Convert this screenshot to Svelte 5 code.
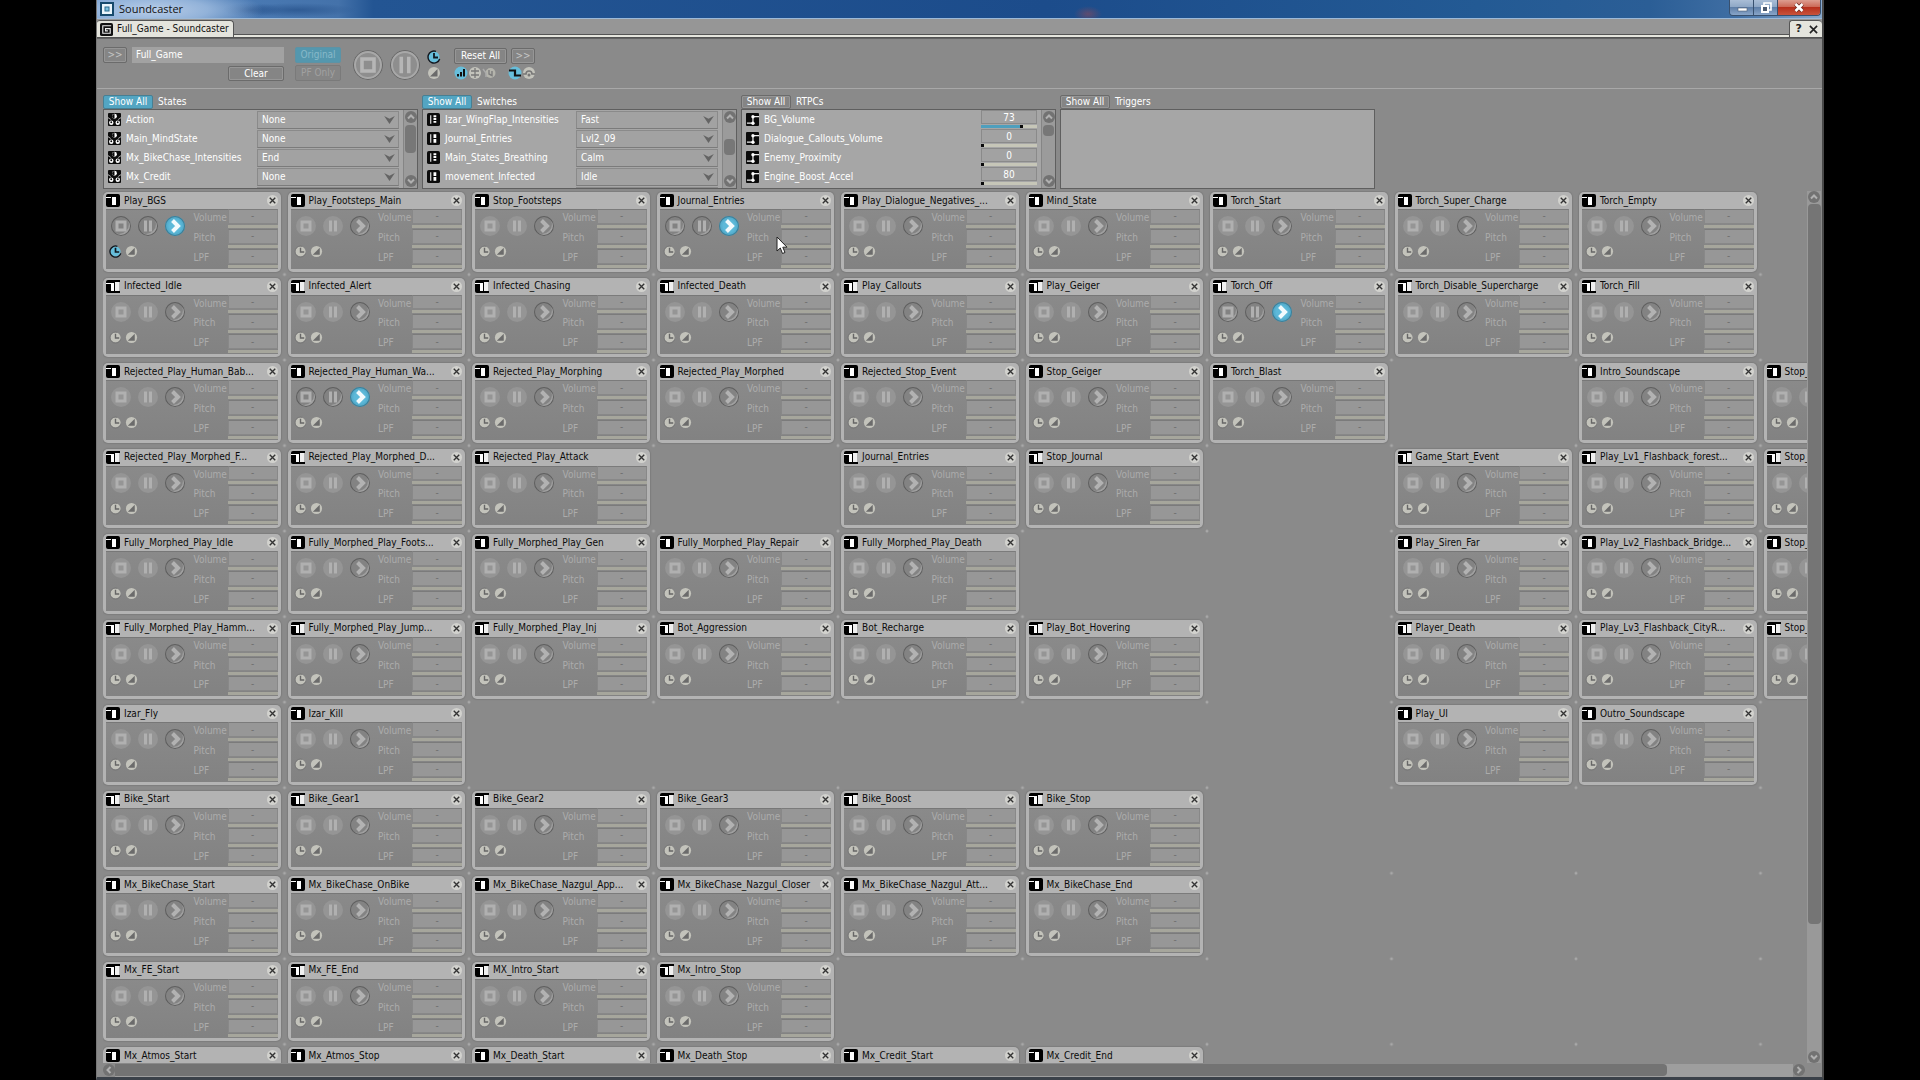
<script>
  const states = [
    ['Action', 'None'],
    ['Main_MindState', 'None'],
    ['Mx_BikeChase_Intensities', 'End'],
    ['Mx_Credit', 'None']
  ];
  const switches = [
    ['Izar_WingFlap_Intensities', 'Fast'],
    ['Journal_Entries', 'Lvl2_09'],
    ['Main_States_Breathing', 'Calm'],
    ['movement_Infected', 'Idle']
  ];
  const rtpcs = [
    ['BG_Volume', 73, 73],
    ['Dialogue_Callouts_Volume', 0, 0],
    ['Enemy_Proximity', 0, 0],
    ['Engine_Boost_Accel', 80, 0]
  ];
  // One array per board row; null leaves the cell empty.
  const board = [
    ['Play_BGS', 'Play_Footsteps_Main', 'Stop_Footsteps', 'Journal_Entries', 'Play_Dialogue_Negatives_...', 'Mind_State', 'Torch_Start', 'Torch_Super_Charge', 'Torch_Empty'],
    ['Infected_Idle', 'Infected_Alert', 'Infected_Chasing', 'Infected_Death', 'Play_Callouts', 'Play_Geiger', 'Torch_Off', 'Torch_Disable_Supercharge', 'Torch_Fill'],
    ['Rejected_Play_Human_Bab...', 'Rejected_Play_Human_Wa...', 'Rejected_Play_Morphing', 'Rejected_Play_Morphed', 'Rejected_Stop_Event', 'Stop_Geiger', 'Torch_Blast', null, 'Intro_Soundscape', 'Stop_'],
    ['Rejected_Play_Morphed_F...', 'Rejected_Play_Morphed_D...', 'Rejected_Play_Attack', null, 'Journal_Entries', 'Stop_Journal', null, 'Game_Start_Event', 'Play_Lv1_Flashback_forest...', 'Stop_'],
    ['Fully_Morphed_Play_Idle', 'Fully_Morphed_Play_Foots...', 'Fully_Morphed_Play_Gen', 'Fully_Morphed_Play_Repair', 'Fully_Morphed_Play_Death', null, null, 'Play_Siren_Far', 'Play_Lv2_Flashback_Bridge...', 'Stop_'],
    ['Fully_Morphed_Play_Hamm...', 'Fully_Morphed_Play_Jump...', 'Fully_Morphed_Play_Inj', 'Bot_Aggression', 'Bot_Recharge', 'Play_Bot_Hovering', null, 'Player_Death', 'Play_Lv3_Flashback_CityR...', 'Stop_'],
    ['Izar_Fly', 'Izar_Kill', null, null, null, null, null, 'Play_UI', 'Outro_Soundscape'],
    ['Bike_Start', 'Bike_Gear1', 'Bike_Gear2', 'Bike_Gear3', 'Bike_Boost', 'Bike_Stop'],
    ['Mx_BikeChase_Start', 'Mx_BikeChase_OnBike', 'Mx_BikeChase_Nazgul_App...', 'Mx_BikeChase_Nazgul_Closer', 'Mx_BikeChase_Nazgul_Att...', 'Mx_BikeChase_End'],
    ['Mx_FE_Start', 'Mx_FE_End', 'MX_Intro_Start', 'Mx_Intro_Stop'],
    ['Mx_Atmos_Start', 'Mx_Atmos_Stop', 'Mx_Death_Start', 'Mx_Death_Stop', 'Mx_Credit_Start', 'Mx_Credit_End']
  ];
  const playing = new Set(['0-0', '0-3', '1-6', '2-1']);
  const cells = board.flatMap((row, r) =>
    Array.from({ length: 10 }, (_, c) => ({ name: row[c] ?? null, odd: r % 2 === 1, on: playing.has(`${r}-${c}`), delay: r === 0 && c === 0 }))
  );
</script>

{#snippet clock()}
  <svg viewBox="0 0 14 14"><circle class="disc" cx="7" cy="7" r="5.500" /><path class="rim" d="M9 1.400A6 6 0 1 0 12.700 9" /><path class="mark" d="M7 3V7.500H11" /></svg>
{/snippet}
{#snippet fade()}
  <svg viewBox="0 0 14 14"><circle class="disc" cx="7" cy="7" r="6" /><path class="wedge" d="M3 10.5L10.5 3V10.5Z" /></svg>
{/snippet}
{#snippet stopIcon()}
  <svg viewBox="0 0 20 20"><path class="thick" d="M6 6H14V14H6Z" /></svg>
{/snippet}
{#snippet pauseIcon()}
  <svg viewBox="0 0 20 20"><path class="thick" d="M7.5 4.5V15.5M12.5 4.5V15.5" /></svg>
{/snippet}
{#snippet scroll(kind)}
  <div class="vbar {kind}">
    <button class="arrow" aria-label="Scroll up"><svg viewBox="0 0 12 12"><path d="M3 7.5L6 4.5L9 7.5" /></svg></button>
    <div class="track"><div class="thumb"></div></div>
    <button class="arrow" aria-label="Scroll down"><svg viewBox="0 0 12 12"><path d="M3 4.5L6 7.5L9 4.5" /></svg></button>
  </div>
{/snippet}

<div class="window">
  <header class="titlebar">
    <svg class="app" viewBox="0 0 14 14"><rect x="1" y="1" width="12" height="12" fill="#eaf5fb" stroke="#174a6c" stroke-width="2" /><rect x="5" y="5" width="4" height="4" fill="#7dc0dc" stroke="#2b6b8e" /></svg>
    <span class="caption">Soundcaster</span>
    <div class="winbtns">
      <button class="wb" aria-label="Minimize"><svg viewBox="0 0 24 16"><rect x="8" y="8" width="9" height="3" fill="#fff" stroke="#4b5a70" stroke-width=".6" /></svg></button>
      <button class="wb" aria-label="Restore"><svg viewBox="0 0 24 16"><path d="M10 5V3H17V10H15" fill="none" stroke="#fff" stroke-width="1.6" /><rect x="8" y="6" width="6" height="6" fill="#4b5a70" stroke="#fff" stroke-width="2" /></svg></button>
      <button class="wb close" aria-label="Close"><svg viewBox="0 0 24 16"><path d="M8.500 4L15.500 11M15.500 4L8.500 11" stroke="#6d2a20" stroke-width="4" /><path d="M8.500 4L15.500 11M15.500 4L8.500 11" stroke="#fff" stroke-width="2.600" /></svg></button>
    </div>
  </header>

  <div class="tabs">
    <div class="tab">
      <svg viewBox="0 0 14 14"><rect width="14" height="14" rx="2" fill="#111" /><path d="M12 3H3V11H11V6H6V8.500H8.500" fill="none" stroke="#eee" stroke-width="1.200" /></svg>
      <span>Full_Game - Soundcaster</span>
    </div>
    <div class="tab tools">
      <button aria-label="Help">?</button>
      <button aria-label="Close view"><svg viewBox="0 0 10 10"><path d="M1 1L9 9M9 1L1 9" stroke="#222" stroke-width="1.800" /></svg></button>
    </div>
  </div>

  <div class="toolbar">
    <button class="btn dim more">&gt;&gt;</button>
    <div class="name">
      <input type="text" aria-label="Session" value="Full_Game" />
      <button class="btn">Clear</button>
    </div>
    <div class="modes">
      <button class="btn orig">Original</button>
      <button class="btn pf">PF Only</button>
    </div>
    <div class="big">
      <button class="round ring" aria-label="Stop all">{@render stopIcon()}</button>
      <button class="round ring" aria-label="Pause all">{@render pauseIcon()}</button>
    </div>
    <div class="marks"><span class="mini lit">{@render clock()}</span><span class="mini">{@render fade()}</span></div>
    <div class="reset">
      <div class="line">
        <button class="btn all">Reset All</button>
        <button class="btn dim more">&gt;&gt;</button>
      </div>
      <div class="line dots">
        <svg class="lit" viewBox="0 0 14 14"><circle class="disc" cx="7" cy="7" r="6.500" /><path d="M4 10.500V8M7 10.500V6M10 10.500V3" stroke="#111" stroke-width="2" /></svg>
        <svg viewBox="0 0 14 14"><circle class="disc" cx="7" cy="7" r="6" /><path d="M7 2V12M3 5H11M3 9H11" stroke="#777" stroke-width="1.300" /></svg>
        <svg viewBox="0 0 14 14"><circle cx="8.500" cy="7" r="5" fill="#b4b4ac" /><path d="M1 3L4 7V11" fill="none" stroke="#aaa" stroke-width="1.500" /><path d="M7 4V8L10 9.500V5" fill="none" stroke="#7c7c7c" stroke-width="1.400" /></svg>
        <svg class="lit gap" viewBox="0 0 14 14"><circle class="disc" cx="7" cy="7" r="6.500" /><path d="M1 4.500H7V9.500H13" fill="none" stroke="#111" stroke-width="2.200" /></svg>
        <svg viewBox="0 0 14 14"><circle class="disc" cx="7" cy="7" r="6" /><path d="M1 8H4A3 3 0 0 1 10 8H13" fill="none" stroke="#777" stroke-width="1.600" /><circle cx="7" cy="9" r="1.500" fill="#777" /></svg>
      </div>
    </div>
  </div>

  <div class="panels">
    <section class="panel">
      <h2><button class="btn show active">Show All</button>States</h2>
      <div class="list">
        <div class="items">
          {#each states as [name, value]}
            <label class="item">
              <svg class="kind" viewBox="0 0 14 14"><rect width="14" height="14" rx="1" fill="#0c0c0c" /><circle cx="7" cy="3.500" r="2.600" fill="#fff" /><path d="M7 1A2.500 2.500 0 0 0 7 6Z" fill="#0c0c0c" /><circle cx="3.500" cy="10.500" r="2.400" fill="#fff" /><circle cx="10.500" cy="10.500" r="2.400" fill="#fff" /><circle cx="3.500" cy="10" r="1" fill="#0c0c0c" /><circle cx="10.500" cy="10" r="1" fill="#0c0c0c" /><path d="M0 5L3 7M14 5L11 7" stroke="#bbb" /></svg>
              <span>{name}</span>
              <select><option>{value}</option></select>
            </label>
          {/each}
          <div class="item"><span></span><div class="peek"></div></div>
        </div>
        {@render scroll('a')}
      </div>
    </section>
    <section class="panel">
      <h2><button class="btn show active">Show All</button>Switches</h2>
      <div class="list">
        <div class="items">
          {#each switches as [name, value], i}
            <label class="item">
              <svg class="kind" viewBox="0 0 14 14"><rect width="14" height="14" rx="2" fill="#0c0c0c" /><path d="M4 2.500V11.500" stroke="#ddd" stroke-width="1.300" /><path d="M8.500 2.500V11.500" stroke="#fff" stroke-width="3" stroke-dasharray={i % 2 ? '4 1' : '2 1'} /></svg>
              <span>{name}</span>
              <select><option>{value}</option></select>
            </label>
          {/each}
          <div class="item"><span></span><div class="peek"></div></div>
        </div>
        {@render scroll('b')}
      </div>
    </section>
    <section class="panel">
      <h2><button class="btn show">Show All</button>RTPCs</h2>
      <div class="list">
        <div class="items">
          {#each rtpcs as [name, value, fill]}
            <div class="item">
              <svg class="kind" viewBox="0 0 14 14"><rect width="14" height="14" rx="1" fill="#0c0c0c" /><path d="M1 11H7.500V4H14" fill="none" stroke="#eee" stroke-width="1.300" /><circle cx="7.500" cy="4" r="1.800" fill="#fff" /><circle cx="7.500" cy="11" r="1.800" fill="#fff" /></svg>
              <span>{name}</span>
              <div class="param">
                <input type="text" aria-label={name} {value} />
                <input type="range" aria-label="{name} slider" value={fill} style="--fill: {fill}%" />
              </div>
            </div>
          {/each}
        </div>
        {@render scroll('c')}
      </div>
    </section>
    <section class="panel">
      <h2><button class="btn show">Show All</button>Triggers</h2>
      <div class="list"></div>
    </section>
  </div>

  <div class="stage">
    <div class="view">
      <div class="board">
        {#each cells as cell}
          {#if cell.name}
            <article class="card" class:on={cell.on}>
              <h3>
                {#if cell.odd}
                  <svg class="kind" viewBox="0 0 14 13"><rect width="9" height="13" rx="2" fill="#000" /><path d="M6 0H14V2H6ZM6 11H14V13H6Z" fill="#000" /><path d="M0 3.500H5" stroke="#fff" stroke-width="1" /><rect x="5" y="3" width="3" height="8" fill="#fff" /><path d="M9 2H13V11H9Z" fill="#efefef" /></svg>
                {:else}
                  <svg class="kind" viewBox="0 0 14 13"><rect width="14" height="13" rx="2" fill="#000" /><path d="M0 3.500H5" stroke="#fff" stroke-width="1" /><rect x="6" y="3" width="4" height="8" fill="#fff" /></svg>
                {/if}
                <span>{cell.name}</span>
                <button class="x" aria-label="Remove {cell.name}"><svg viewBox="0 0 12 12"><circle cx="6" cy="6" r="6" fill="#d2d2ce" /><path d="M3 3L9 9M9 3L3 9" stroke="#333" stroke-width="1.500" /></svg></button>
              </h3>
              <div class="body">
                <div class="controls">
                  <div class="transport">
                    <button class="round" class:ring={cell.on} aria-label="Stop">{@render stopIcon()}</button>
                    <button class="round" class:ring={cell.on} aria-label="Pause">{@render pauseIcon()}</button>
                    <button class="round ring play" aria-label="Play"><svg viewBox="0 0 20 20"><path class="chev" d="M7.500 4.500L13 10L7.500 15.500" /></svg></button>
                  </div>
                  <div class="flags"><span class="mini" class:lit={cell.delay}>{@render clock()}</span><span class="mini">{@render fade()}</span></div>
                </div>
                <div class="props">
                  {#each ['Volume', 'Pitch', 'LPF'] as prop}
                    <label class="prop"><span>{prop}</span><span class="field"><input type="text" value="-" readonly /><i></i></span></label>
                  {/each}
                </div>
              </div>
            </article>
          {:else}
            <div></div>
          {/if}
        {/each}
      </div>
    </div>
    {@render scroll('main')}
  </div>
  <div class="hbar">
    <button class="arrow" aria-label="Scroll left"><svg viewBox="0 0 12 12"><path d="M7.500 3L4.500 6L7.500 9" /></svg></button>
    <div class="htrack"><div class="hthumb"></div></div>
    <button class="arrow" aria-label="Scroll right"><svg viewBox="0 0 12 12"><path d="M4.500 3L7.500 6L4.500 9" /></svg></button>
  </div>
  <svg class="pointer" viewBox="0 0 12 19"><path d="M1 1V15L4.300 12L6.500 17.500L9 16.500L6.800 11.200H11Z" fill="#fff" stroke="#222" /></svg>
</div>

<style>
  :global(body) { background: #000; overflow: hidden; }
  * { box-sizing: border-box; }
  button, input, select { font: inherit; color: inherit; margin: 0; padding: 0; border: 0; background: none; border-radius: 0; min-width: 0; }
  h2, h3 { margin: 0; font: inherit; }
  svg { display: block; flex: none; }
  .window { height: 100vh; margin: 0 5%; display: flex; flex-direction: column; background: #8a8a8a; color: #fff; font: 10px/14px "DejaVu Sans Condensed", "DejaVu Sans", sans-serif; border-left: 1px solid #777; border-right: 2px solid #4a4a4a; border-bottom: 3px solid #3b4149; }

  .titlebar { flex: none; height: 19px; display: flex; align-items: center; padding-left: 3px; gap: 5px; border-bottom: 1px solid #9cb9d8;
    background: radial-gradient(ellipse 110px 24px at 56px 10px, #b8cde8 0, #a3bfe1cc 50%, transparent 100%), radial-gradient(ellipse 14px 8px at 991px 14px, #8a4a5c99, transparent), radial-gradient(ellipse 30px 7px at 155px 10px, #25508a99, transparent), radial-gradient(ellipse 60px 7px at 200px 10px, #2a558ecc, transparent), linear-gradient(90deg, #5b8cc6 0, #4a7ab4 8%, #4472aa 14%, #235593 16%, #1c4c8b 55%, #235a94 80%, #2b5e96 90%, #3f6ea3 95%, #88a8cc 100%); }
  .app { width: 14px; height: 14px; }
  .caption { color: #111; font: 11px/16px "Open Sans", sans-serif; flex: 1; }
  .winbtns { display: flex; align-self: flex-start; height: 16px; margin-right: 1px; border: 1px solid #38506e; border-top: 0; border-radius: 0 0 4px 4px; overflow: hidden; }
  .wb { width: 24px; background: linear-gradient(#a9bdd6, #8fa8c6 45%, #5f7fa8 50%, #88a5c8); border-right: 1px solid #38506e; }
  .wb svg { width: 24px; height: 16px; margin: auto; }
  .wb.close { width: 42px; border: 0; background: linear-gradient(#dd9e90, #cc6a58 45%, #b7301c 50%, #c8533c); }

  .tabs { flex: none; height: 20px; display: flex; justify-content: space-between; align-items: stretch; background: linear-gradient(#969696 15px, #555 15px, #555 16px, #e6e6de 16px, #e6e6de 18px, #4b4b4b 18px, #6b6b6b 20px); }
  .tab { display: flex; align-items: center; gap: 4px; height: 17px; margin-top: 1px; padding: 0 4px 0 3px; background: #e4e4dd; border: 1px solid #555; border-width: 1px 1px 0 0; border-radius: 3px 4px 0 0; color: #111; }
  .tab svg { width: 13px; height: 13px; }
  .tools { border-width: 1px 0 0 1px; gap: 7px; padding: 0 4px 0 6px; }
  .tools button { font: bold 11px/14px "DejaVu Sans", sans-serif; color: #222; }
  .tools svg { width: 9px; height: 9px; }

  .btn { height: 16px; border: 1px solid #6b6b6b; border-radius: 2px; background: #858585; color: #fff; box-shadow: inset 0 0 0 1px #969696; text-align: center; line-height: 14px; }
  .dim { color: #c4c4c4; }
  .more { width: 24px; }
  .toolbar { flex: none; display: flex; align-items: flex-start; height: 50px; padding: 8px 0 0 6px; border-bottom: 1px solid #a8a8a8; }
  .name { margin-left: 5px; width: 152px; display: flex; flex-direction: column; align-items: flex-end; gap: 3px; }
  .name input { width: 100%; height: 16px; background: #a2a2a2; padding: 0 4px; line-height: 16px; }
  .name .btn { width: 56px; height: 15px; line-height: 13px; }
  .modes { margin-left: 11px; width: 46px; display: flex; flex-direction: column; gap: 2px; }
  .orig { background: #5497ae; border-color: #5c93a6; color: #88b9c9; box-shadow: none; }
  .pf { color: #a1a1a1; border-color: #7a7a7a; box-shadow: none; }
  .round { display: flex; flex: none; width: 20px; height: 20px; border-radius: 50%; background: #959595; }
  .round svg { width: 100%; height: 100%; fill: none; }
  .ring { background: #828282; box-shadow: inset 0 0 0 1px #5f5f5f, inset -2px -2px 0 0 #a0a0a0; }
  .thick { stroke: #b0b0b0; stroke-width: 3; }
  .chev { stroke: #b2b2b2; stroke-width: 4; }
  .big { display: flex; gap: 7px; margin: 3px 0 0 12px; }
  .big .round { width: 30px; height: 30px; background: #8e8e8e; box-shadow: inset 0 0 0 1px #666, inset 0 0 0 3px #a8a8a8; }
  .big .thick { stroke-width: 2.400; stroke: #b6b6b6; }
  .marks { display: flex; flex-direction: column; gap: 2px; margin: 3px 0 0 7px; }
  .mini { display: block; width: 14px; height: 14px; }
  .disc { fill: #c3c3bb; }
  .mark { fill: none; stroke: #666; stroke-width: 1.500; }
  .rim { fill: none; stroke: #777; stroke-width: 1; }
  .wedge { fill: #6b6b6b; }
  .lit .disc { fill: #67bedb; }
  .lit .mark { stroke: #101820; stroke-width: 1.800; }
  .lit .rim { stroke: #101820; stroke-width: 1.400; }
  .reset { margin: 1px 0 0 13px; }
  .line { display: flex; gap: 4px; }
  .all { width: 53px; }
  .dots { gap: 0; margin-top: 2px; }
  .dots svg { width: 14px; height: 14px; }
  .dots .gap { margin-left: 12px; }

  .panels { flex: none; display: flex; gap: 4px; padding: 5px 6px 0; height: 102px; }
  .panel { flex: 0 1 315px; min-width: 0; display: flex; flex-direction: column; }
  .panel h2 { display: flex; align-items: center; gap: 5px; height: 15px; }
  .show { width: 50px; height: 14px; line-height: 12px; }
  .active { background: #53a5c2; border-color: #477f93; box-shadow: none; }
  .list { flex: none; height: 80px; display: flex; background: #a6a6a6; border: 1px solid #5f5f5f; overflow: hidden; }
  .items { flex: 1; min-width: 0; }
  .item { display: flex; align-items: center; height: 19px; padding-left: 4px; }
  .item > span { flex: 1; padding-left: 5px; }
  .item .kind { width: 13px; height: 13px; }
  select { appearance: none; width: 142px; height: 18px; margin-right: 4px; padding: 0 4px; background: #a2a2a2; border: 1px solid #8a8a8a; border-bottom-color: #7b7b7b;
    background-image: url("data:image/svg+xml,%3Csvg xmlns='http://www.w3.org/2000/svg' viewBox='0 0 12 9'%3E%3Cpath d='M0 0L6 3L12 0L6 9Z' fill='%23646464'/%3E%3C/svg%3E"); background-repeat: no-repeat; background-position: right 3px center; background-size: 11px 8px; }
  .peek { width: 142px; height: 18px; margin-right: 4px; border: 1px solid #8a8a8a; }
  .param { width: 56px; height: 19px; margin-right: 4px; display: flex; flex-direction: column; gap: 1px; }
  .param input[type="text"] { height: 14px; text-align: center; border: 1px solid #8a8a8a; background: #a2a2a2; width: 100%; line-height: 12px; }
  input[type="range"] { appearance: none; width: 100%; height: 3px; background: linear-gradient(90deg, #4f9fbd var(--fill), #c6c6b8 var(--fill)); }
  input[type="range"]::-webkit-slider-thumb { appearance: none; width: 3px; height: 3px; background: #0a0a0a; }

  .vbar { flex: none; width: 14px; padding: 1px 0; display: flex; flex-direction: column; align-items: center; background: #9b9b9b; border-left: 1px solid #858585; }
  .arrow { display: block; flex: none; width: 12px; height: 12px; border-radius: 50%; background: #727272; }
  .arrow svg { width: 12px; height: 12px; fill: none; stroke: #b0b0b0; stroke-width: 2; }
  .track { flex: 1; width: 11px; padding-top: 2px; }
  .thumb { height: 28px; border-radius: 4px; background: #777; }
  .b .track { padding-top: 16px; }
  .b .thumb { height: 16px; }
  .c .thumb { height: 11px; }

  .stage { flex: 1; min-height: 0; display: flex; padding: 0 1px 0 6px; }
  .view { flex: 1; min-width: 0; overflow: hidden; padding-top: 1px; }
  .board { width: 1845px; height: 941px; padding: 0 7px 6px 0; display: grid; grid-template-columns: repeat(10, minmax(0, 1fr)); grid-template-rows: repeat(11, minmax(0, 1fr)); gap: 6px 7px;
    background: radial-gradient(circle at calc(100% - 3px) calc(100% - 3px), #b8b8b8 0, transparent 2px) 0 0 / calc(100% / 10) calc(100% / 11); }
  .card { display: flex; flex-direction: column; background: #b3b3b3; border-radius: 5px; padding: 0 3px 3px; box-shadow: 0 0 1px 1px #7d7d7d; }
  h3 { flex: none; display: flex; align-items: center; height: 17px; color: #0b0b0b; }
  h3 .kind { width: 14px; height: 13px; }
  h3 span { flex: 1; padding-left: 4px; white-space: nowrap; overflow: hidden; }
  .x { width: 11px; height: 12px; }
  .x svg { width: 11px; height: 11px; }
  .body { flex: 1; min-height: 0; display: flex; justify-content: space-between; background: linear-gradient(#8a8a8a, #828282); box-shadow: inset 0 1px 0 #777; }
  .controls { padding: 7px 0 0 5px; }
  .transport { display: flex; gap: 7px; }
  .flags { display: flex; gap: 3px; margin: 9px 0 0 -2px; }
  .flags .mini { width: 13px; height: 13px; }
  .play { background: #838383; }
  .on .play { background: radial-gradient(#5db9d9 40%, #3d90b0); box-shadow: inset 0 0 0 1px #3f7d95; }
  .on .chev { stroke: #f2fafd; }
  .props { display: flex; flex-direction: column; width: 85px; }
  .prop { flex: 1; display: flex; justify-content: space-between; color: #acacac; }
  .prop > span:first-child { line-height: 17px; padding-left: 1px; }
  .field { display: flex; flex-direction: column; width: 50px; }
  .field input { width: 100%; flex: 1; min-height: 0; text-align: center; background: #979797; border: 1px solid #888; border-top-color: #7b7b7b; color: #707070; line-height: 12px; }
  .field i { flex: none; height: 3px; background: #a6a69c; margin: 1px 0; }

  .main { width: 14px; background: #999; border: 0; padding: 0; }
  .main .track { width: 13px; padding-top: 1px; }
  .main .thumb { height: 85%; background: #757575; }
  .hbar { flex: none; height: 14px; display: flex; align-items: center; padding: 0 17px 0 6px; }
  .htrack { flex: 1; height: 13px; background: #9e9e9e; }
  .hthumb { width: 92.500%; height: 12px; background: #737373; border-radius: 0 4px 4px 0; }
  .pointer { position: absolute; left: 776px; top: 236px; width: 12px; height: 19px; }
</style>
